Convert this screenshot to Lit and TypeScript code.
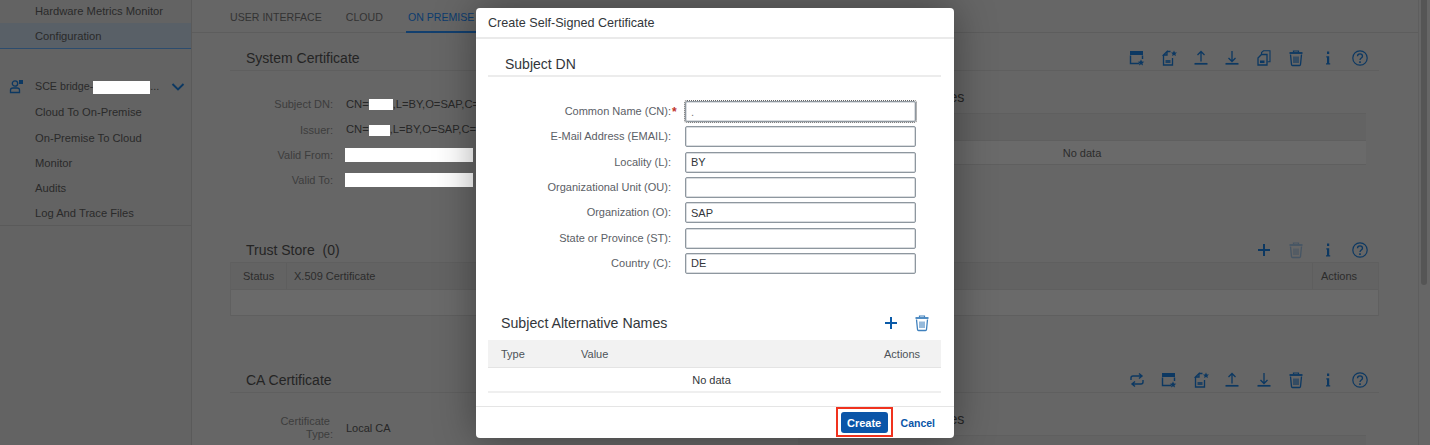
import { LitElement, html, css, svg, nothing } from "lit";
import { customElement } from "lit/decorators.js";

const ICONS: Record<string, unknown> = {
  cal: svg`<path d="M2.500 6.500V14.500H11M14.500 10V6.500" fill="none" stroke="currentColor" stroke-width="1.400"/><path d="M2 2H15V6H2z" fill="currentColor"/><path d="M13 10.500l1 2.100 2.200.2-1.700 1.500.5 2.200-2-1.200-2 1.200.5-2.200-1.700-1.500 2.200-.2z" fill="currentColor"/>`,
  doc: svg`<path d="M7 2.500H10.500M3.500 6V16H12.500V9M3.500 6L7 2.500V6H3.500z" fill="none" stroke="currentColor" stroke-width="1.300"/><path d="M5.500 11H10.500V14H5.500z" fill="currentColor" opacity=".8"/><path d="M14 1.500l.9 1.900 2.100.2-1.600 1.400.5 2.100-1.900-1.100-1.900 1.100.5-2.100-1.600-1.400 2.100-.2z" fill="currentColor"/>`,
  up: svg`<path d="M9 12.500V2.500M5.500 6L9 2.500 12.500 6" fill="none" stroke="currentColor" stroke-width="1.300"/><path d="M2.500 14.800H15.500" stroke="currentColor" stroke-width="1.700"/>`,
  down: svg`<path d="M9 2V12.500M5.500 9L9 12.500 12.500 9" fill="none" stroke="currentColor" stroke-width="1.300"/><path d="M2.500 14.800H15.500" stroke="currentColor" stroke-width="1.700"/>`,
  copy: svg`<path d="M6.500 5.500V3.500L8.500 1.800H15V12.800H12.500" fill="none" stroke="currentColor" stroke-width="1.100"/><path d="M3 9L6.500 5.500H12V16H3z" fill="none" stroke="currentColor" stroke-width="1.300"/><path d="M5 11.500H9.500V14H5z" fill="currentColor"/>`,
  trash: svg`<path d="M3.500 5.500L4.500 15.500Q4.600 16.500 5.500 16.500H12.500Q13.400 16.500 13.500 15.500L14.500 5.500" fill="none" stroke="currentColor" stroke-width="1.300"/><path d="M2.500 4H15.500" stroke="currentColor" stroke-width="1.800"/><path d="M6.500 3.200V2H11.500V3.200" fill="none" stroke="currentColor" stroke-width="1.200"/><path d="M7 7.500V14M9 7.500V14M11 7.500V14" stroke="currentColor" stroke-width="1.100"/>`,
  info: svg`<path d="M8 2.500H10.200V5H8zM7.300 7.200H10.200V14.200H11.200V15.500H7V14.200H8V8.500H7.300z" fill="currentColor"/>`,
  help: svg`<circle cx="9" cy="9" r="7.200" fill="none" stroke="currentColor" stroke-width="1.200"/><path d="M6.500 7.200C6.500 4.200 11.500 4.200 11.500 7.200C11.500 9 9 9 9 11" fill="none" stroke="currentColor" stroke-width="1.300"/><path d="M8.200 12.300H9.800V13.900H8.200z" fill="currentColor"/>`,
  plus: svg`<path d="M9 3V15M3 9H15" stroke="currentColor" stroke-width="2"/>`,
  sync: svg`<path d="M3 9V7Q3 5 5 5H13.500M11 2.500L14 5 11 7.500M15 9V11Q15 13 13 13H4.500M7 10.500L4 13 7 15.500" fill="none" stroke="currentColor" stroke-width="1.400"/>`,
  chevron: svg`<path d="M3.500 6L9 11.500 14.500 6" fill="none" stroke="currentColor" stroke-width="1.900"/>`,
  user: svg`<circle cx="7" cy="6.500" r="2.700" fill="none" stroke="currentColor" stroke-width="1.300"/><path d="M2.500 15.500V13Q2.500 11 5 11H9Q11.500 11 11.500 13V15.500z" fill="none" stroke="currentColor" stroke-width="1.300"/><path d="M11 3H15V7H11z" fill="currentColor"/>`,
};

const icon = (name: string) =>
  html`<svg class="ico" viewBox="0 0 18 18" aria-hidden="true">${ICONS[name]}</svg>`;

const NAV_TOP = ["Hardware Metrics Monitor"];
const NAV_BOTTOM = ["Cloud To On-Premise", "On-Premise To Cloud", "Monitor", "Audits", "Log And Trace Files"];
const FIELDS = [
  ["Common Name (CN):", ".", true],
  ["E-Mail Address (EMAIL):", "", false],
  ["Locality (L):", "BY", false],
  ["Organizational Unit (OU):", "", false],
  ["Organization (O):", "SAP", false],
  ["State or Province (ST):", "", false],
  ["Country (C):", "DE", false],
] as const;

@customElement("app-root")
export class AppRoot extends LitElement {
  static styles = css`
    :host {
      display: block;
      width: 1430px;
      height: 445px;
      overflow: hidden;
      position: relative;
      font-family: "Liberation Sans", Arial, sans-serif;
      font-size: 11px;
      color: #2a2a2a;
      background: #666;
    }
    * { box-sizing: border-box; }
    .shell { display: flex; height: 445px; }
    .ico { width: 18px; height: 18px; display: block; color: #0c3862; }

    .side { width: 192px; flex: none; background: #636363; border-right: 1px solid #5a5a5a; font-size: 11.2px; }
    .nav-item { height: 25.3px; padding-left: 35px; display: flex; align-items: center; white-space: nowrap; }
    .nav-first { margin-top: -2px; }
    .nav-sel { background: #596067; border-bottom: 1px solid #2c4c6e; height: 26px; }
    .nav-group { margin-top: 25px; border-bottom: 1px solid #5a5a5a; height: 152px; }
    .nav-head { position: relative; font-size: 10.7px; }
    .nav-head .ico { position: absolute; }
    .user-ico { left: 8px; top: 3px; }
    .chev { left: 169px; top: 4px; }
    .mask { display: inline-block; background: #fff; vertical-align: middle; }
    .m-bridge { width: 57px; height: 13px; }

    .main { flex: 1; min-width: 0; overflow: hidden; }
    .tabs { height: 33px; display: flex; gap: 24px; padding-left: 38px; border-bottom: 1px solid #5d5d5d; }
    .tab { height: 33px; display: flex; align-items: center; color: #333; font-size: 10.6px; }
    .tab-on { color: #0c3c6e; border-bottom: 2px solid #123f6e; padding: 2px 2px 0; margin-left: -1px; }

    .panel { margin: 0 39px 0 38px; }
    .head { height: 27px; display: flex; align-items: center; justify-content: space-between; padding: 2px 3px 0 16px; }
    .rule { border-bottom: 1px solid #5f5f5f; }
    .title { font-size: 14px; color: #242424; white-space: nowrap; }
    .tools { display: flex; }
    .tools button { all: unset; width: 31.9px; height: 24px; display: flex; align-items: center; justify-content: center; }
    .tools .off { opacity: .35; }

    .p-sys { margin-top: 11px; height: 191px; }
    .p-trust { height: 105px; }
    .p-ca { height: 80px; margin-top: 26px; }

    .cols { display: grid; grid-template-columns: 568px 568px; }
    .facts { display: grid; grid-template-columns: 103px 1fr; column-gap: 13px; padding-top: 20.500px; align-content: start; grid-auto-rows: 25.400px; width: 568px; }
    .k { text-align: right; color: #3d3d3d; align-self: center; }
    .v { align-self: center; white-space: nowrap; color: #272727; }
    .v-id { font-size: 11.200px; }
    .m-cn { width: 24px; height: 11px; }
    .m-is { width: 21px; height: 11px; }
    .m-date { width: 128px; height: 14px; margin-left: -1px; }
    .side-t { font-size: 14.200px; padding-top: 18px; height: 42px; color: #242424; white-space: nowrap; }
    .san { width: 568px; }
    .thead { height: 28px; background: #636363; border-top: 1px solid #5f5f5f; border-bottom: 1px solid #5f5f5f; }
    .tbody { height: 24px; padding-top: 1px; background: #6a6a6a; border-bottom: 1px solid #5f5f5f; display: flex; align-items: center; justify-content: center; color: #2c2c2c; }

    .trust-table { border-left: 1px solid #606060; border-right: 1px solid #606060; }
    .trust-h { display: grid; grid-template-columns: 56px 1fr 65px; height: 28px; background: #636363; border-top: 1px solid #5f5f5f; border-bottom: 1px solid #5f5f5f; align-items: center; }
    .trust-h > div { height: 100%; display: flex; align-items: center; padding-left: 12px; color: #2c2c2c; border-right: 1px solid #5e5e5e; }
    .trust-h > div:nth-child(2) { padding-left: 7px; }
    .trust-h > div:last-child { border-right: 0; padding-left: 8px; }
    .trust-r { height: 26px; background: #6a6a6a; border-bottom: 1px solid #5f5f5f; }
    .facts-ca { padding-top: 21px; grid-auto-rows: 28px; }
    .k-ca { line-height: 13px; }

    .scroll { width: 12px; flex: none; background: #666; border-left: 1px solid #5e5e5e; padding: 0 3px 0 2px; }
    .thumb { height: 285px; background: #555; border-radius: 0 0 3px 3px; }

    .dialog {
      position: absolute; left: 476px; top: 8px; width: 478px; height: 430px;
      background: #fff; border-radius: 4px; display: flex; flex-direction: column;
      box-shadow: 0 0 40px rgba(0,0,0,.38); color: #32363a;
    }
    .d-head { height: 31px; padding: 0 12px; display: flex; align-items: center; border-bottom: 2px solid #eaeaea; font-size: 12.600px; flex: none; }
    .d-body { flex: 1; padding: 0 13px 0 12px; min-height: 0; }
    .d-sec { height: 38px; padding: 11px 0 0 17px; border-bottom: 2px solid #ececec; font-size: 14px; line-height: 28px; }
    .form { display: grid; grid-template-columns: 185px 231px; column-gap: 12px; grid-auto-rows: 25.300px; margin-top: 22px; align-items: center; }
    .lbl { text-align: right; color: #5b6066; position: relative; padding-right: 2px; margin-top: -1px; }
    .req { position: absolute; margin-left: 1px; color: #c0322b; font-weight: bold; font-size: 12px; }
    .inp { width: 231px; height: 21px; border: 1px solid #8e979f; border-radius: 2px; padding: 0 5px; font: inherit; color: #32363a; background: #fff; box-shadow: inset 0 0 0 .5px #b6bcc2; }
    .inp-focus { outline: 1px dotted #666; outline-offset: 0; color: #777; }
    .d-sub { margin-top: 30px; height: 34px; display: flex; align-items: center; justify-content: space-between; padding: 0 10px 0 13px; font-size: 14.200px; }
    .d-sub .ico { color: #0a5aa8; }
    .d-tools { display: flex; gap: 13px; }
    .d-tools .lite .ico { color: #3f80bd; }
    .d-thead { height: 28px; background: #f2f2f2; border-bottom: 1px solid #e4e4e4; display: grid; grid-template-columns: 80px 1fr 57px; padding-left: 13px; align-items: center; color: #4d5258; }
    .d-row { height: 25px; padding-right: 6px; display: flex; align-items: center; justify-content: center; border-bottom: 2px solid #efefef; }
    .d-foot { height: 32px; flex: none; border-top: 1px solid #e5e5e5; display: flex; align-items: center; justify-content: flex-end; padding: 0 19px 0 0; gap: 13px; }
    .btn { width: 47px; height: 21px; border-radius: 3px; background: #0a55a8; color: #fff; font-weight: bold; display: flex; align-items: center; justify-content: center; }
    .lnk { color: #0a55a8; font-weight: bold; font-size: 10.500px; }
    .wrap { position: relative; }
    .callout { position: absolute; inset: -5px -5px -4px -5px; border: 2px solid #f0321e; }
  `;

  private tools(names: string[], off: string[] = []) {
    return html`<div class="tools">${names.map(
      (n) => html`<button class=${off.includes(n) ? "off" : ""}>${icon(n)}</button>`
    )}</div>`;
  }

  private sanTable(top: string) {
    return html`<div class="san">
      <div class="side-t">${top}</div>
      <div class="thead"></div>
      <div class="tbody">No data</div>
    </div>`;
  }

  private svgAt(name: string, cls: string) {
    return html`<svg class="ico ${cls}" viewBox="0 0 18 18" aria-hidden="true">${ICONS[name]}</svg>`;
  }

  render() {
    return html`
      <div class="shell">
        <aside class="side">
          ${NAV_TOP.map((n) => html`<div class="nav-item nav-first">${n}</div>`)}
          <div class="nav-item nav-sel">Configuration</div>
          <div class="nav-group">
            <div class="nav-item nav-head">
              ${this.svgAt("user", "user-ico")}
              <span>SCE bridge-<span class="mask m-bridge"></span>...</span>
              ${this.svgAt("chevron", "chev")}
            </div>
            ${NAV_BOTTOM.map((n) => html`<div class="nav-item">${n}</div>`)}
          </div>
        </aside>

        <main class="main">
          <div class="tabs">
            <div class="tab">USER INTERFACE</div>
            <div class="tab">CLOUD</div>
            <div class="tab tab-on">ON PREMISE</div>
          </div>

          <section class="panel p-sys">
            <div class="head rule">
              <div class="title">System Certificate</div>
              ${this.tools(["cal", "doc", "up", "down", "copy", "trash", "info", "help"])}
            </div>
            <div class="cols">
              <div class="facts">
                <div class="k">Subject DN:</div><div class="v v-id">CN=<span class="mask m-cn"></span>,L=BY,O=SAP,C=DE</div>
                <div class="k">Issuer:</div><div class="v v-id">CN=<span class="mask m-is"></span>,L=BY,O=SAP,C=DE</div>
                <div class="k">Valid From:</div><div class="v"><span class="mask m-date"></span></div>
                <div class="k">Valid To:</div><div class="v"><span class="mask m-date"></span></div>
              </div>
              ${this.sanTable("Subject Alternative Names")}
            </div>
          </section>

          <section class="panel p-trust">
            <div class="head">
              <div class="title">Trust Store&nbsp; (0)</div>
              ${this.tools(["plus", "trash", "info", "help"], ["trash"])}
            </div>
            <div class="trust-table">
              <div class="trust-h"><div>Status</div><div>X.509 Certificate</div><div>Actions</div></div>
              <div class="trust-r"></div>
            </div>
          </section>

          <section class="panel p-ca">
            <div class="head rule">
              <div class="title">CA Certificate</div>
              ${this.tools(["sync", "cal", "doc", "up", "down", "trash", "info", "help"])}
            </div>
            <div class="cols">
              <div class="facts facts-ca">
                <div class="k k-ca">Certificate&nbsp;<br />Type:</div><div class="v">Local CA</div>
              </div>
              ${this.sanTable("Subject Alternative Names")}
            </div>
          </section>
        </main>

        <div class="scroll"><div class="thumb"></div></div>
      </div>

      <div class="dialog" role="dialog">
        <div class="d-head">Create Self-Signed Certificate</div>
        <div class="d-body">
          <div class="d-sec">Subject DN</div>
          <div class="form">
            ${FIELDS.map(
              ([label, value, req]) => html`
                <div class="lbl">${label}${req ? html`<span class="req">*</span>` : nothing}</div>
                <input class="inp ${req ? "inp-focus" : ""}" .value=${value} readonly />
              `
            )}
          </div>
          <div class="d-sub">
            <span>Subject Alternative Names</span>
            <div class="d-tools">${icon("plus")}<span class="lite">${icon("trash")}</span></div>
          </div>
          <div class="d-thead"><div>Type</div><div>Value</div><div>Actions</div></div>
          <div class="d-row">No data</div>
        </div>
        <div class="d-foot">
          <div class="wrap"><div class="btn">Create</div><div class="callout"></div></div>
          <div class="lnk">Cancel</div>
        </div>
      </div>
    `;
  }
}
